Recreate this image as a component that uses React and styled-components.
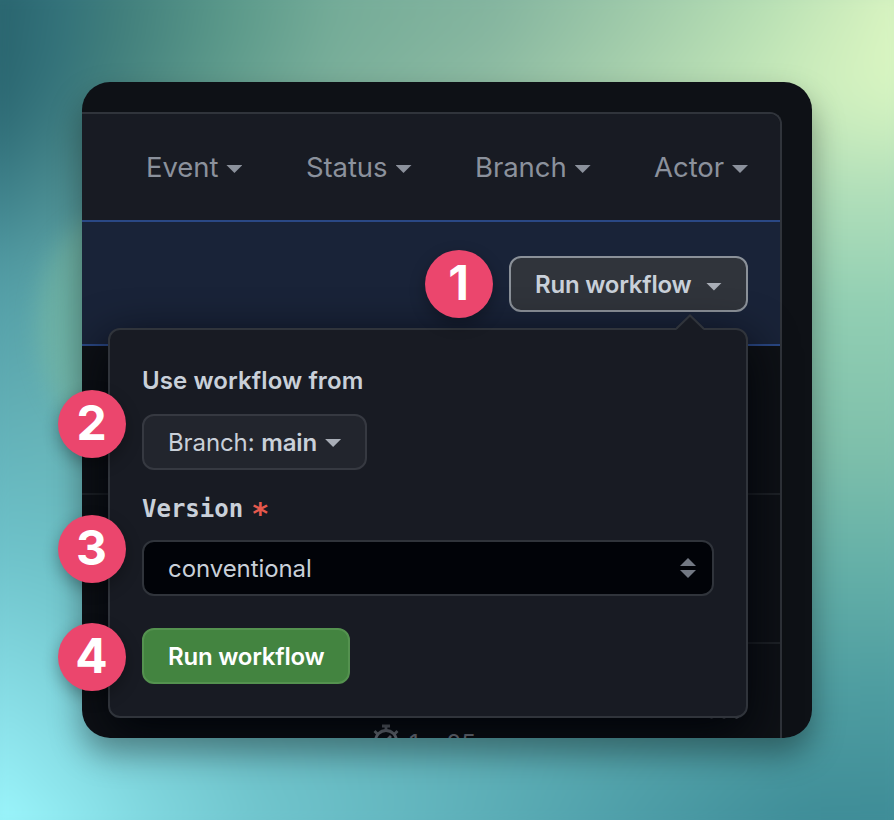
import React from 'react';
import styled, { createGlobalStyle } from 'styled-components';

const GlobalStyle = createGlobalStyle`
  * { box-sizing: border-box; }
  html, body { margin: 0; padding: 0; overflow: hidden; }
  body { font-family: Inter, "Liberation Sans", sans-serif; }
`;

const Stage = styled.main`
  position: relative;
  isolation: isolate;
  width: 894px;
  height: 820px;
  padding: 82px;
  overflow: hidden;
  background: #5ba8b0;
`;

const Backdrop = styled.div`
  position: absolute;
  z-index: 0;
  inset: -30px;
  isolation: isolate;
  filter: blur(16px);
  background:
    linear-gradient(180deg, #e6fec6 3%, #d8f6c2 12%, #b9e3bb 22%, #92cfb3 38%, #7fc0ab 54%, #66b1a8 67%, #4f9ea1 81%, #3e8c97 97%);

  &::before {
    content: "";
    position: absolute;
    z-index: -1;
    inset: 0;
    background: linear-gradient(97deg, #29646e 3%, #33727a 9%, #3f7d7b 14%, #5b998a 25%, #75ac98 35%, #85b59f 50%, #a0cbaa 64%, #b6deb3 75%, #d0eebd 85%, #e4fcc5 93%, #e8ffc8 97%);
    mask-image: linear-gradient(176deg, #000 0%, #000 9%, rgba(0, 0, 0, 0.85) 13%, rgba(0, 0, 0, 0.3) 22%, transparent 30%);
  }

  &::after {
    content: "";
    position: absolute;
    z-index: -2;
    inset: 0;
    background: linear-gradient(180deg, #2b6670 3%, #34737f 14%, #3c7e88 20%, #55a0a8 38%, #60adb4 49%, #6ec2ca 66%, #8fe5ed 87%, #9cf7fd 97%);
    mask-image: linear-gradient(90deg, #000 0%, #000 3%, rgba(0, 0, 0, 0.88) 10%, rgba(0, 0, 0, 0.72) 18%, rgba(0, 0, 0, 0.54) 30%, rgba(0, 0, 0, 0.36) 50%, rgba(0, 0, 0, 0.16) 70%, rgba(0, 0, 0, 0.02) 86%, transparent 92%);
  }
`;

const Glow = styled.div`
  position: absolute;
  z-index: 0;
  left: 38px;
  top: 215px;
  width: 140px;
  height: 220px;
  border-radius: 50%;
  background: #7cbba0;
  opacity: 0.5;
  filter: blur(11px);
`;

const Window = styled.section`
  position: relative;
  z-index: 1;
  width: 730px;
  height: 656px;
  border-radius: 28px;
  box-shadow: 0 16px 32px rgba(0, 0, 0, 0.38);
`;

const Viewport = styled.div`
  position: relative;
  height: 100%;
  padding: 30px 30px 0 0;
  overflow: hidden;
  border-radius: inherit;
  background: #0e1116;
`;

const Table = styled.div`
  height: 640px;
  border: 2px solid #30343b;
  border-left: 0;
  border-bottom: 0;
  border-radius: 0 12px 0 0;
  overflow: hidden;
`;

const Filters = styled.header`
  display: flex;
  align-items: center;
  justify-content: flex-end;
  gap: 63.5px;
  height: 106px;
  padding-right: 32px;
  background: #181b23;
`;

const Filter = styled.button`
  display: flex;
  align-items: center;
  gap: 8px;
  padding: 0;
  border: 0;
  background: none;
  color: #8b919c;
  font: 400 27.5px/40px Inter, sans-serif;
  letter-spacing: -0.07px;
`;

const Caret = styled.span`
  flex: none;
  width: 16px;
  height: 8px;
  margin-top: ${({ $drop }) => $drop || 0}px;
  background: ${({ $color }) => $color || 'currentColor'};
  clip-path: polygon(${({ $up }) => ($up ? '50% 0, 100% 100%, 0 100%' : '0 0, 100% 0, 50% 100%')});
`;

const DispatchBar = styled.div`
  display: flex;
  align-items: flex-start;
  justify-content: flex-end;
  height: 126px;
  padding: 34px 32px 0 0;
  border-top: 2px solid #2a4885;
  border-bottom: 2px solid #2a4885;
  background: #192338;
`;

const Button = styled.button`
  display: flex;
  align-items: center;
  height: 56px;
  padding: 2px 0 0 24px;
  border: 2px solid;
  border-radius: 12px;
  font: 600 24px/40px Inter, sans-serif;
  white-space: nowrap;
`;

const TriggerButton = styled(Button)`
  gap: 14.5px;
  width: 239px;
  border-color: #8b9199;
  background: #30343b;
  color: #c9d0d9;
  letter-spacing: -0.22px;
`;

const RunRow = styled.div`
  height: ${({ $height }) => $height}px;
  border-bottom: 2px solid #1e2227;
`;

const RunFooter = styled.div`
  display: grid;
  grid-template-columns: 1fr auto;
  align-items: start;
  height: 110px;
  padding: 68px 41px 0 290px;
`;

const RunDetails = styled.div`
  display: flex;
  align-items: flex-start;
  gap: 9px;
  margin-top: 12px;
  color: #959ba5;
  font: 400 24px/30px Inter, sans-serif;

  span { padding-top: 5px; }
`;

const MoreIcon = styled.svg`
  margin-top: 1.3px;
  color: #a9aeb7;
`;

const Popover = styled.div`
  position: absolute;
  left: 26px;
  top: 246px;
  width: 640px;
  height: 390px;
  padding: 32px;
  border: 2px solid #30343b;
  border-radius: 12px;
  background: #181b23;
  box-shadow: 0 16px 48px #010409;
`;

const Arrow = styled.svg`
  position: absolute;
  right: 42px;
  top: -16px;
`;

const Label = styled.div`
  height: 36px;
  padding-top: 1px;
  color: #c9d0d9;
  font: 600 24px/36px Inter, sans-serif;
  letter-spacing: 0.1px;
`;

const BranchButton = styled(Button)`
  gap: 8px;
  width: 225px;
  margin: 16px 0 20px;
  border-color: #363941;
  background: #22252d;
  color: #c9d0d9;
  font-weight: 400;
  letter-spacing: -0.1px;

  b { font-weight: 600; }
`;

const InputLabel = styled.div`
  display: flex;
  gap: 8px;
  height: 36px;
  padding-top: 1px;
  color: #c9d0d9;
  font: 700 24px/36px "DejaVu Sans Mono", monospace;
`;

const Required = styled.span`
  padding-top: 5px;
  color: #e5594d;
  font-size: 30px;
`;

const Select = styled.div`
  display: flex;
  align-items: center;
  justify-content: space-between;
  width: 572px;
  height: 56px;
  margin: 14px 0 32px;
  padding: 0 16px 0 24px;
  border: 2px solid #30343b;
  border-radius: 12px;
  background: #010308;
  color: #c9d0d9;
  font: 400 24px/40px Inter, sans-serif;
  letter-spacing: -0.08px;
`;

const SelectValue = styled.span`
  padding-top: 2px;
`;

const Sorter = styled.span`
  display: grid;
  gap: 4px;
  color: #727883;
`;

const SubmitButton = styled(Button)`
  width: 208px;
  border-color: #54924f;
  background: #438440;
  color: #fff;
  letter-spacing: -0.22px;
`;

const Badge = styled.div`
  position: absolute;
  left: ${({ $x }) => $x}px;
  top: ${({ $y }) => $y}px;
  display: grid;
  place-items: center;
  width: 68px;
  height: 68px;
  padding: 0 1px 2px 0;
  border-radius: 50%;
  background: #eb466d;
  box-shadow: 0 6px 16px rgba(0, 0, 0, 0.3);
  color: #fff;
  font: 700 48px/60px Inter, sans-serif;
`;

const filters = ['Event', 'Status', 'Branch', 'Actor'];

const steps = [
  { n: 1, x: 343, y: 168 },
  { n: 2, x: -24, y: 308 },
  { n: 3, x: -24, y: 433 },
  { n: 4, x: -24, y: 541 },
];

const Stopwatch = () => (
  <svg width="28" height="30" viewBox="0 0 28 30" fill="none" stroke="currentColor" strokeWidth="2.8">
    <circle cx="14" cy="17" r="10.5" />
    <path d="M10 2h8M14 2v5M14 17l5-5M2.5 7l3.5 3.5M25.5 7L22 10.5" />
  </svg>
);

export default function App() {
  return (
    <Stage>
      <GlobalStyle />
      <Backdrop />
      <Glow />
      <Window>
        <Viewport>
          <Table>
            <Filters>
              {filters.map((name) => (
                <Filter key={name}>{name}<Caret $drop={4} /></Filter>
              ))}
            </Filters>
            <DispatchBar>
              <TriggerButton>Run workflow<Caret $drop={3} $color="#a9aeb7" /></TriggerButton>
            </DispatchBar>
            <RunRow $height={149} />
            <RunRow $height={149} />
            <RunFooter>
              <RunDetails><Stopwatch /><span>1m 25s</span></RunDetails>
              <MoreIcon width="30" height="6" viewBox="0 0 30 6" fill="currentColor">
                <circle cx="2.5" cy="3" r="2.5" />
                <circle cx="15" cy="3" r="2.5" />
                <circle cx="27.5" cy="3" r="2.5" />
              </MoreIcon>
            </RunFooter>
          </Table>
          <Popover>
            <Arrow width="28" height="16" viewBox="0 0 28 16">
              <path d="M0 16L14 2L28 16" fill="#181b23" />
              <path d="M0 15L14 1.5L28 15" fill="none" stroke="#30343b" strokeWidth="2" />
            </Arrow>
            <Label>Use workflow from</Label>
            <BranchButton><span>Branch: <b>main</b></span><Caret $color="#a9aeb7" /></BranchButton>
            <InputLabel>Version<Required>*</Required></InputLabel>
            <Select><SelectValue>conventional</SelectValue><Sorter><Caret $up /><Caret /></Sorter></Select>
            <SubmitButton>Run workflow</SubmitButton>
          </Popover>
        </Viewport>
        {steps.map(({ n, x, y }) => <Badge key={n} $x={x} $y={y}>{n}</Badge>)}
      </Window>
    </Stage>
  );
}
